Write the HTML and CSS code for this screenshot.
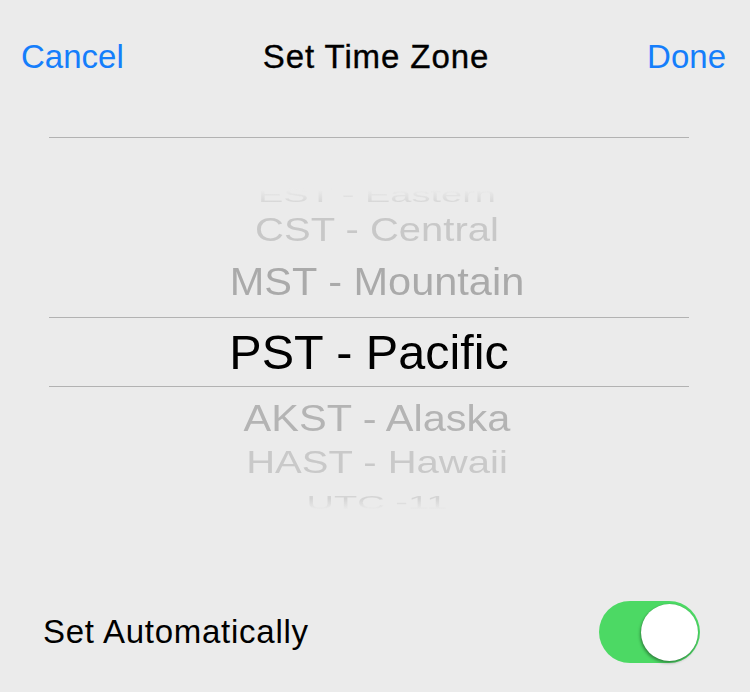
FILE: index.html
```html
<!DOCTYPE html>
<html>
<head>
<meta charset="utf-8">
<link rel="stylesheet" href="styles.css">
</head>
<body>
<div class="screen">
  <header class="nav">
    <span class="nav-btn nav-left">Cancel</span>
    <span class="nav-title">Set Time Zone</span>
    <span class="nav-btn nav-right">Done</span>
  </header>

  <div class="picker">
    <div class="wheel">
      <div class="row r-est"><span class="fade-top">EST - Eastern</span></div>
      <div class="row r-cst"><span>CST - Central</span></div>
      <div class="row r-mst"><span>MST - Mountain</span></div>
      <div class="row r-pst"><span>PST - Pacific</span></div>
      <div class="row r-akst"><span>AKST - Alaska</span></div>
      <div class="row r-hast"><span>HAST - Hawaii</span></div>
      <div class="row r-utc"><span class="fade-bottom">UTC -11</span></div>
    </div>
  </div>

  <div class="auto-row">
    <span class="auto-label">Set Automatically</span>
    <div class="toggle"><div class="knob"></div></div>
  </div>
</div>
</body>
</html>
```

FILE: styles.css
```css
html, body {
  margin: 0;
  padding: 0;
  background: #ebebeb;
}

.screen {
  width: 750px;
  height: 692px;
  background: #ebebeb;
  font-family: "Liberation Sans", Arial, sans-serif;
  overflow: hidden;
}

.nav {
  display: grid;
  grid-template-columns: 1fr auto 1fr;
  align-items: center;
  padding: 38px 24px 0 21px;
  height: 38px;
  line-height: 38px;
  font-size: 33px;
}

.nav-btn {
  color: #157efb;
}

.nav-left {
  justify-self: start;
}

.nav-right {
  justify-self: end;
}

.nav-title {
  color: #000;
  letter-spacing: 0.9px;
  -webkit-text-stroke: 0.35px #000;
  margin-left: 5px;
}

.picker {
  width: 640px;
  margin: 61px 0 0 49px;
  border-top: 1px solid #b2b2b2;
}

.wheel {
  padding-top: 40px;
}

.row {
  display: flex;
  justify-content: center;
  align-items: center;
  padding-left: 16px;
  color: #b0b0b0;
}

.row span {
  display: block;
  line-height: 1.149;
  white-space: nowrap;
  transform-origin: 50% 50%;
}

.r-est { height: 36px; }
.r-est span {
  font-size: 38px;
  transform: scaleY(0.54);
}

.r-cst { height: 32px; color: #c8c8c8; }
.r-cst span {
  font-size: 40px;
  transform: scaleY(0.81);
}

.r-mst { height: 71px; color: #aaaaaa; }
.r-mst span {
  font-size: 41.5px;
  transform: scaleY(0.95);
}

.r-pst {
  height: 66px;
  padding: 2px 0 0 0;
  border-top: 1px solid #b2b2b2;
  border-bottom: 1px solid #b2b2b2;
  color: #000;
}
.r-pst span {
  font-size: 48.5px;
}

.r-akst { height: 64px; color: #b4b4b4; }
.r-akst span {
  font-size: 41.5px;
  transform: scaleY(0.89);
}

.r-hast { height: 24px; color: #c9c9c9; }
.r-hast span {
  font-size: 40px;
  transform: scaleY(0.77);
}

.r-utc { height: 56px; }
.r-utc span {
  font-size: 38px;
  transform: scaleY(0.5);
}

.fade-top {
  background: linear-gradient(to bottom, #ebebeb 25%, #d6d6d6 80%);
  -webkit-background-clip: text;
  background-clip: text;
  color: transparent;
}

.fade-bottom {
  background: linear-gradient(to bottom, #d4d4d4 30%, #ebebeb 80%);
  -webkit-background-clip: text;
  background-clip: text;
  color: transparent;
}

.auto-row {
  display: flex;
  justify-content: space-between;
  align-items: center;
  height: 62px;
  margin-top: 70px;
  padding: 0 50px 0 43px;
}

.auto-label {
  font-size: 33px;
  line-height: 38px;
  letter-spacing: 0.75px;
  color: #000;
}

.toggle {
  width: 101px;
  height: 62px;
  border-radius: 31px;
  background: #4cd964;
  display: flex;
  justify-content: flex-end;
  align-items: center;
  box-sizing: border-box;
  padding-right: 2px;
}

.knob {
  width: 57px;
  height: 57px;
  border-radius: 50%;
  background: #fff;
  box-shadow: -1px 2px 3px rgba(0, 0, 0, 0.35), 0 0 1px rgba(0, 0, 0, 0.25);
}
```
